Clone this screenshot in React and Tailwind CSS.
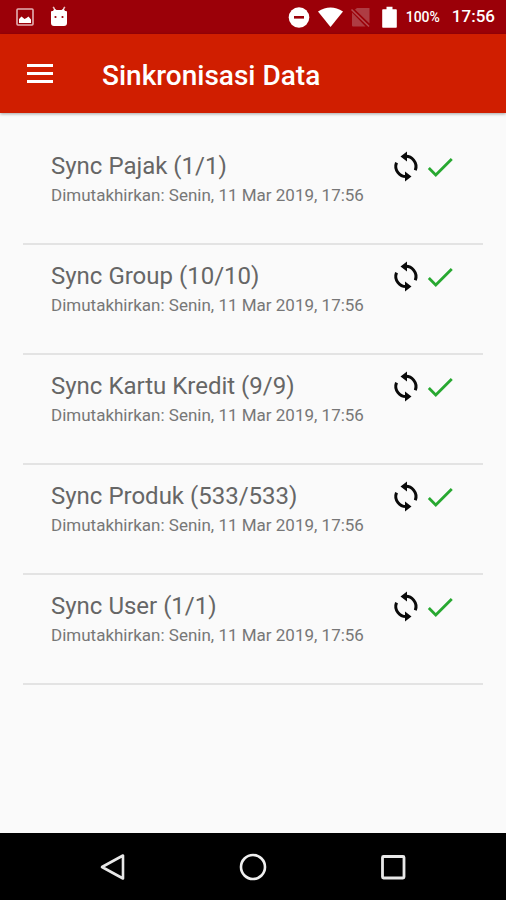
const items = [
  { name: 'Sync Pajak (1/1)', updated: 'Senin, 11 Mar 2019, 17:56' },
  { name: 'Sync Group (10/10)', updated: 'Senin, 11 Mar 2019, 17:56' },
  { name: 'Sync Kartu Kredit (9/9)', updated: 'Senin, 11 Mar 2019, 17:56' },
  { name: 'Sync Produk (533/533)', updated: 'Senin, 11 Mar 2019, 17:56' },
  { name: 'Sync User (1/1)', updated: 'Senin, 11 Mar 2019, 17:56' },
];

function StatusBar() {
  return (
    <div className="flex h-[34px] items-center justify-between bg-[#9b0008] pr-[11px] pl-4 text-white">
      <div className="flex items-center gap-4">
        <svg className="h-[18px] w-[18px]" viewBox="0 0 18 18" aria-hidden="true">
          <rect x="1" y="1" width="16" height="16" rx="1" fill="none" stroke="#e3b0b3" strokeWidth="1.6" />
          <path d="M3 15v-4l2.500-2.500 3 2.500 2-1 2-1.500 2.500 3V15z" fill="#fff" />
        </svg>
        <svg className="h-[22px] w-[18px]" viewBox="0 0 18 22" aria-hidden="true">
          <path d="M4.500 3 3.200 .8M13.500 3l1.300-2.200" stroke="#e9c0c2" strokeWidth="1.500" />
          <path d="M1 6q0-1 1-1h1l1.500-2.500L6.500 4h5l2-1.500L15 5h1q1 0 1 1v11q0 3-3 3H4q-3 0-3-3z" fill="#fff" />
          <circle cx="5.500" cy="11" r="1.100" fill="#9b0008" />
          <circle cx="12.500" cy="11" r="1.100" fill="#9b0008" />
        </svg>
      </div>
      <div className="flex items-center">
        <svg className="h-[22px] w-[118px]" viewBox="0 0 118 22" aria-hidden="true">
          <circle cx="11" cy="11.500" r="10.300" fill="#fff" />
          <rect x="6" y="10" width="10" height="2.600" fill="#9b0008" />
          <path d="M30 5.500Q42.500-2.500 55 5.500L42.500 21z" fill="#fff" />
          <path d="M69 2h12.500v15.500L67 3.500z M64 6.500 77.500 20.500H65q-1 0-1-1z" fill="#ae3c43" />
          <path d="m63.500 3.500 17.500 17" stroke="#b54a51" strokeWidth="1.600" />
          <path d="M95 3.200h3.500V.8h6v2.400h3.500q.8 0 .8.800v17q0 .8-.8.800H95q-.8 0-.8-.8V4q0-.8.8-.8z" fill="#fff" />
        </svg>
        <span className="text-sm font-medium">100%</span>
        <span className="ml-3 text-[17px] font-medium">17:56</span>
      </div>
    </div>
  );
}

function AppBar() {
  return (
    <header className="relative flex h-[79px] items-center gap-12 bg-[#d01e00] pl-[26px] text-white shadow-[0_1px_3px_rgba(0,0,0,0.35)]">
      <button type="button" aria-label="Menu" className="h-7 w-7">
        <svg viewBox="0 0 28 28" className="h-7 w-7">
          <path d="M1 5.500h26M1 13.500h26M1 21.500h26" stroke="#fff" strokeWidth="3" />
        </svg>
      </button>
      <h1 className="pt-1 text-[28px] leading-9 font-medium">Sinkronisasi Data</h1>
    </header>
  );
}

function SyncRow({ name, updated }) {
  return (
    <li className="flex h-[110px] items-start justify-between border-b-2 border-[#e3e3e3] pr-[26px] pl-7 pt-[15px]">
      <div>
        <h2 className="text-2xl leading-8 text-[#666]">{name}</h2>
        <p className="text-[17px] leading-[26px] text-[#777]">Dimutakhirkan: {updated}</p>
      </div>
      <div className="flex">
        <button type="button" aria-label={'Sinkronkan ' + name}>
          <svg viewBox="0 0 34 34" className="h-[34px] w-[34px]" fill="none" stroke="#0a0a0a" strokeWidth="3">
            <path d="M15 6.500a10.300 10.300 0 0 1 11.300 13.800M18.500 26.500A10.300 10.300 0 0 1 7.500 12.600" />
            <path d="M18 1.500 11.500 6.500 18 11.500zM16 21.500l6.500 5-6.500 5z" fill="#0a0a0a" stroke="none" />
          </svg>
        </button>
        <svg viewBox="0 0 24 24" className="h-[34px] w-[34px]" fill="#27a830" role="img" aria-label="Selesai">
          <path d="M9 16.170 4.830 12l-1.420 1.410L9 19 21 7l-1.410-1.410z" />
        </svg>
      </div>
    </li>
  );
}

function NavBar() {
  return (
    <nav className="flex h-[67px] items-center justify-center gap-[108px] bg-black">
      <button type="button" aria-label="Kembali">
        <svg viewBox="0 0 32 32" className="h-8 w-8" fill="none" stroke="#e8e8e8" strokeWidth="2.600" strokeLinejoin="round">
          <path d="M26 4.500v23L5 16z" />
        </svg>
      </button>
      <button type="button" aria-label="Beranda">
        <svg viewBox="0 0 32 32" className="h-8 w-8" fill="none" stroke="#f0f0f0" strokeWidth="2.600">
          <circle cx="16" cy="16" r="12" />
        </svg>
      </button>
      <button type="button" aria-label="Aplikasi terbaru">
        <svg viewBox="0 0 32 32" className="h-8 w-8" fill="none" stroke="#e8e8e8" strokeWidth="2.800">
          <rect x="5.500" y="5.500" width="21.500" height="21.500" rx="1" />
        </svg>
      </button>
    </nav>
  );
}

export default function App() {
  return (
    <div className="flex min-h-screen flex-col bg-[#fafafa] font-[Roboto,sans-serif]">
      <StatusBar />
      <AppBar />
      <main className="flex-1 px-[23px] pt-[22px]">
        <ul>
          {items.map((item) => (
            <SyncRow key={item.name} name={item.name} updated={item.updated} />
          ))}
        </ul>
      </main>
      <NavBar />
    </div>
  );
}
